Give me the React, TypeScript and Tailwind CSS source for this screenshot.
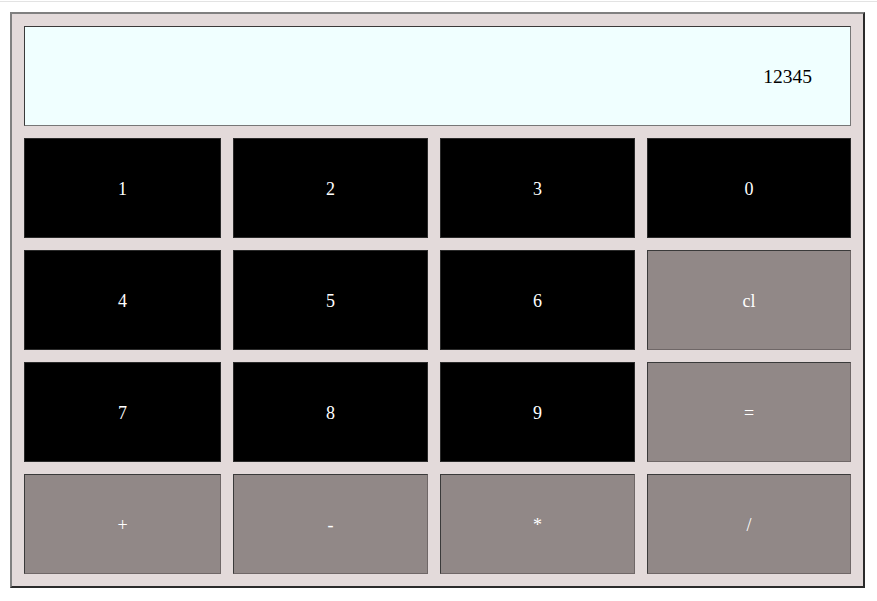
const keys = [
  { label: "1", dark: true },
  { label: "2", dark: true },
  { label: "3", dark: true },
  { label: "0", dark: true },
  { label: "4", dark: true },
  { label: "5", dark: true },
  { label: "6", dark: true },
  { label: "cl", dark: false },
  { label: "7", dark: true },
  { label: "8", dark: true },
  { label: "9", dark: true },
  { label: "=", dark: false },
  { label: "+", dark: false },
  { label: "-", dark: false },
  { label: "*", dark: false },
  { label: "/", dark: false },
];

export default function App() {
  return (
    <div className="w-[877px] h-[601px] bg-white pt-px font-['Liberation_Serif',serif]">
      <div className="h-px bg-[#e3e3e3]" />
      <div className="ml-[10px] mt-[10px] w-[855px] h-[576px] border-2 border-t-[#808080] border-l-[#808080] border-b-[#2b2b2b] border-r-[#2b2b2b] bg-[#e3dada] p-3">
        {/* display */}
        <div className="h-[100px] border border-t-[#3a3a3a] border-l-[#3a3a3a] border-b-[#777] border-r-[#777] bg-[#f0ffff] flex items-center justify-end pr-[38px] pt-[2px] text-[19.5px] text-black">
          12345
        </div>

        {/* keys */}
        <div className="mt-3 grid grid-cols-[197px_195px_195px_204px] auto-rows-[100px] gap-3">
          {keys.map((k) => (
            <button
              key={k.label}
              className={
                k.dark
                  ? "flex items-center justify-center border border-[#2a2a2a] bg-black pt-[2px] text-[18px] text-white"
                  : "flex items-center justify-center border border-t-[#3a3a3a] border-l-[#3a3a3a] border-b-[#6f6767] border-r-[#6f6767] bg-[#918887] pt-[2px] text-[18px] text-white"
              }
            >
              {k.label}
            </button>
          ))}
        </div>
      </div>
    </div>
  );
}
